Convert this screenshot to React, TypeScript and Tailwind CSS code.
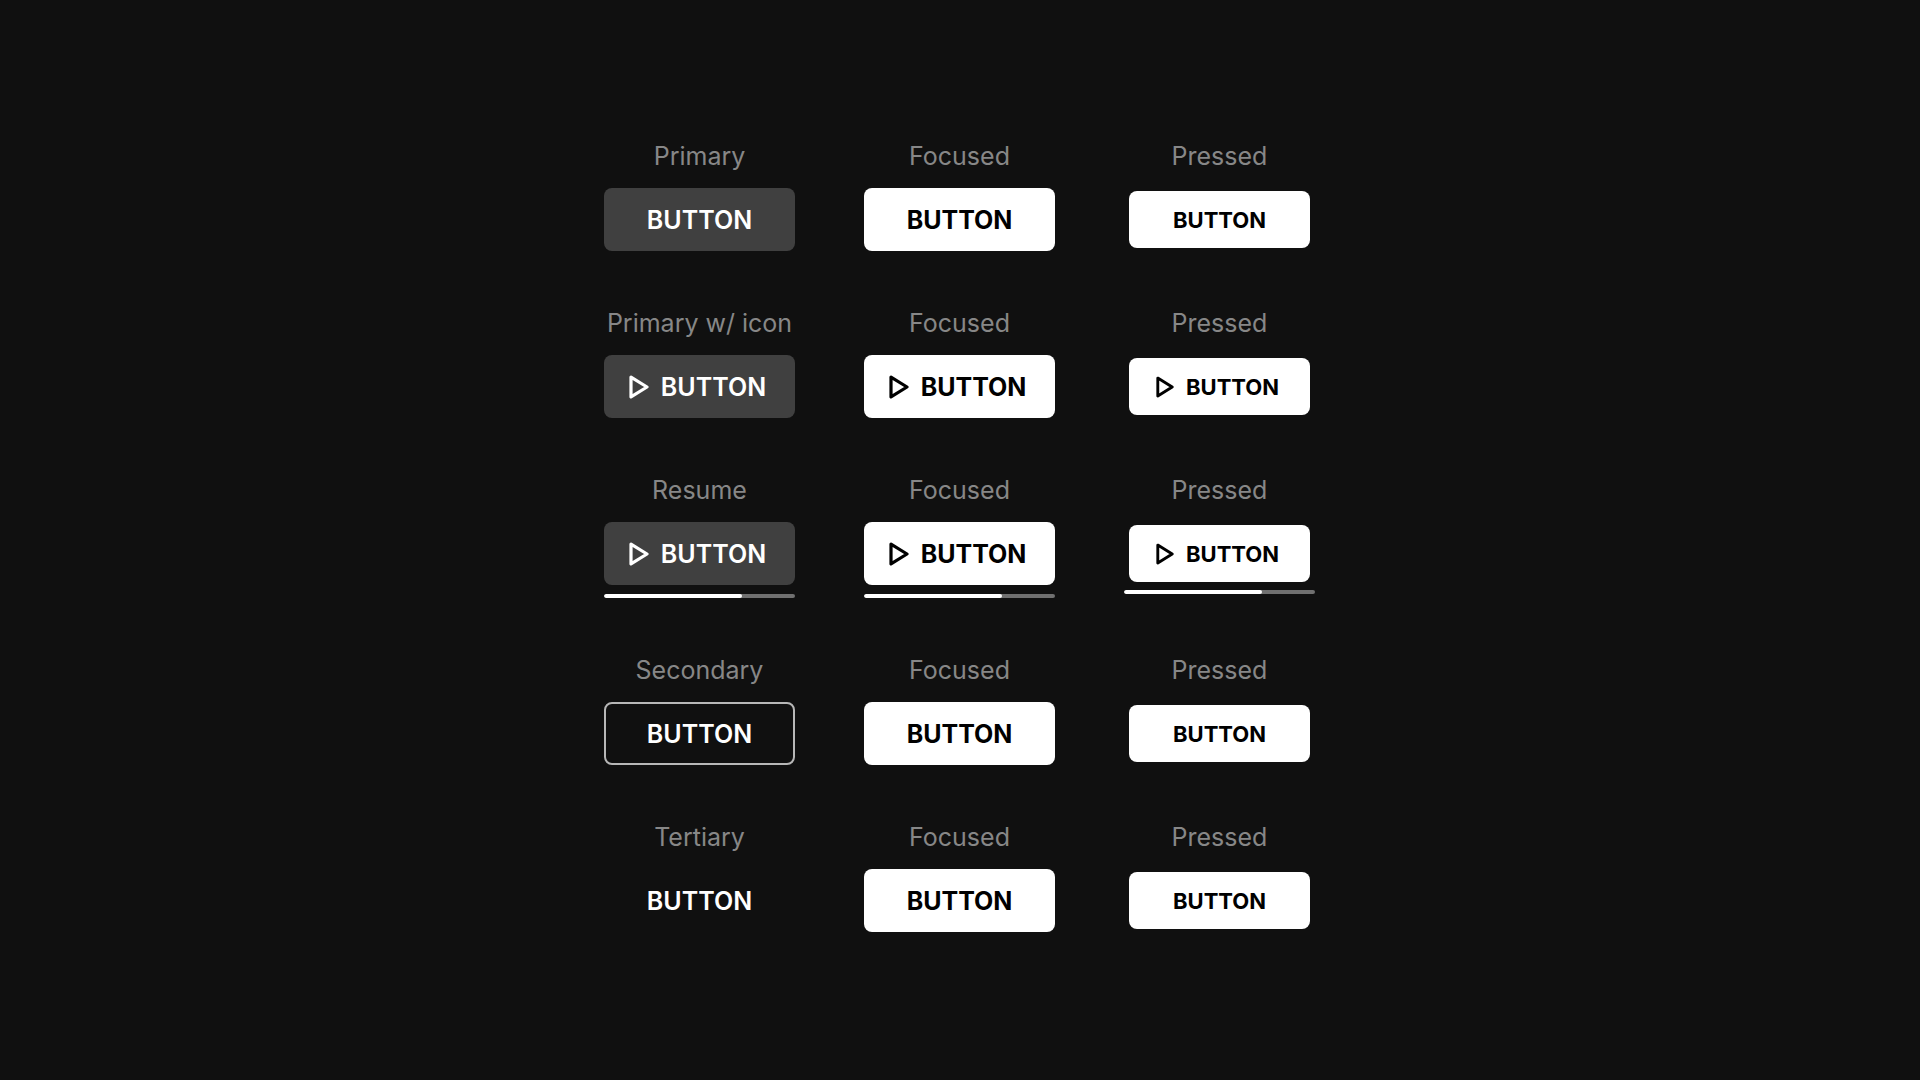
import clsx from 'clsx'

type Variant = 'primary' | 'secondary' | 'tertiary'
type State = 'default' | 'focused' | 'pressed'

type Row = {
    label: string
    variant: Variant
    icon?: boolean
    progress?: number
}

const rows: Row[] = [
    { label: 'Primary', variant: 'primary' },
    { label: 'Primary w/ icon', variant: 'primary', icon: true },
    { label: 'Resume', variant: 'primary', icon: true, progress: 72 },
    { label: 'Secondary', variant: 'secondary' },
    { label: 'Tertiary', variant: 'tertiary' },
]

const states: State[] = ['default', 'focused', 'pressed']

const variants = {
    primary: 'bg-[#404040] text-white',
    secondary: 'border-2 border-[#b7b7b7] text-white',
    tertiary: 'text-white',
}

function PlayIcon({ className }: { className: string }) {
    return (
        <svg className={className} viewBox="0 0 20 24" fill="none" stroke="currentColor" strokeWidth="3.2" strokeLinejoin="round" aria-hidden="true">
            <path d="M2 2.1 L18 12 L2 21.9 Z" />
        </svg>
    )
}

function Button({ variant, state, icon }: { variant: Variant, state: State, icon?: boolean }) {
    const pressed = state === 'pressed'

    return (
        <button
        type="button"
        className={clsx(
            'flex items-center justify-center rounded-lg pt-0.5',
            pressed ? 'mt-[3px] h-[57px] w-[181px] text-[22px]' : 'h-[63px] w-full text-[25px]',
            state === 'default' ? variants[variant] : 'bg-white text-black',
            state === 'default' ? 'font-semibold' : 'font-bold',
            icon && 'gap-3 pr-1'
        )}>
            {icon && <PlayIcon className={pressed ? 'mb-0.5 h-[22px] w-[18px]' : 'mb-0.5 h-6 w-5'} />}
            BUTTON
        </button>
    )
}

function Progress({ value, pressed }: { value: number, pressed: boolean }) {
    return (
        <div className={clsx('h-1 w-full overflow-hidden rounded-full bg-[#707070]', pressed ? 'mt-2' : 'mt-[9px]')}>
            <div className="h-full rounded-full bg-white" style={{ width: `${value}%` }}></div>
        </div>
    )
}

function Cell({ row, state }: { row: Row, state: State }) {
    const titles = { default: row.label, focused: 'Focused', pressed: 'Pressed' }

    return (
        <div className="flex flex-col items-center">
            <h2 className="mb-4 whitespace-nowrap text-[25px] leading-8 font-normal text-[#878787]">{titles[state]}</h2>
            <Button variant={row.variant} state={state} icon={row.icon} />
            {row.progress && <Progress value={row.progress} pressed={state === 'pressed'} />}
        </div>
    )
}

function App() {
    return (
        <main className="flex min-h-screen items-center justify-center bg-[#101010] pr-px pb-2 font-['Inter',sans-serif]">
            <div className="grid grid-cols-[repeat(3,191px)] gap-x-[69px] gap-y-14">
                {rows.map((row) => states.map((state) => (
                    <Cell key={row.label + state} row={row} state={state} />
                )))}
            </div>
        </main>
    )
}

export default App
